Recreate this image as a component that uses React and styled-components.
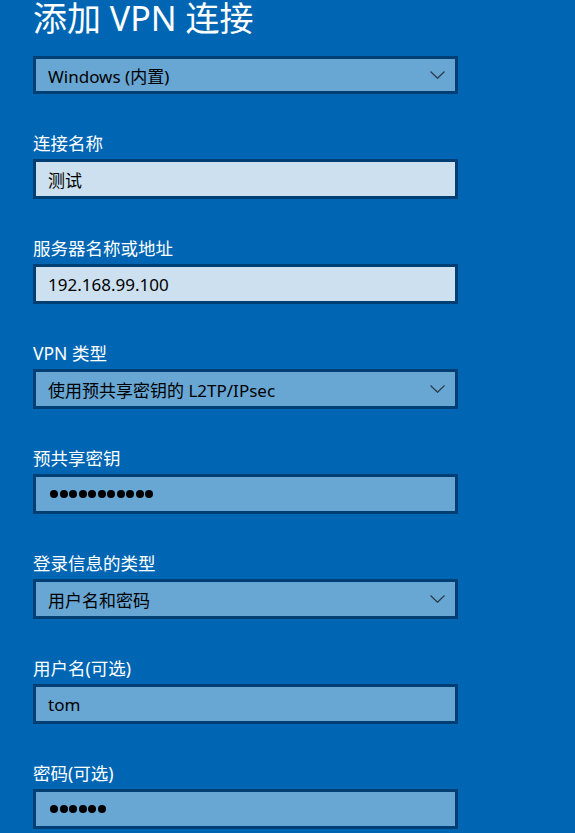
import styled, { createGlobalStyle } from 'styled-components';

const GlobalStyle = createGlobalStyle`
  html, body {
    margin: 0;
    padding: 0;
    background: #0066b4;
  }
  body {
    font-family: "Noto Sans", "Noto Sans CJK SC", sans-serif;
  }
`

const Page = styled.div`
  width: 575px;
  height: 833px;
  overflow: hidden;
  background: #0066b4;
  padding-left: 33px;
  box-sizing: border-box;
  display: flex;
  flex-direction: column;
  gap: 37px;
`

const Title = styled.h1`
  margin: 0 0 -17px 0;
  height: 36px;
  font-size: 34px;
  line-height: 36px;
  font-weight: 400;
  color: #ffffff;
  white-space: nowrap;
`

const Field = styled.div`
  display: flex;
  flex-direction: column;
  gap: 4px;
`

const Label = styled.div`
  height: 24px;
  font-size: 17.5px;
  line-height: 24px;
  color: #ffffff;
`

const Box = styled.div`
  width: 425px;
  height: ${(p) => (p.compact ? '38px' : '40px')};
  flex: none;
  box-sizing: border-box;
  border: 3px solid #003f73;
  background: ${(p) => (p.light ? '#cce0ef' : '#68a6d3')};
  display: flex;
  align-items: center;
  justify-content: space-between;
  padding: 0 10px 0 12px;
  font-size: 17px;
  color: #000000;
`

const Chevron = styled.svg`
  width: 15px;
  height: 8px;
  flex: none;
`

const Dots = styled.div`
  display: flex;
  gap: 1.5px;
  padding-left: 2px;
`

const Dot = styled.span`
  width: 8px;
  height: 8px;
  border-radius: 50%;
  background: #000000;
`

function Select(props) {
    return (
        <Box compact={props.compact}>
            <span>{props.value}</span>
            <Chevron viewBox="0 0 15 8">
                <path d="M0.5 0.5 L7.5 7.3 L14.5 0.5" fill="none" stroke="#2b3a4a" strokeWidth="1.2" />
            </Chevron>
        </Box>
    )
}

function Secret(props) {
    let dots = [];
    for (let i = 0; i < props.count; i++) {
        dots.push(<Dot key={i} />)
    }
    return (
        <Box>
            <Dots>{dots}</Dots>
        </Box>
    )
}

export default function App() {
    return (
        <Page>
            <GlobalStyle />
            <Title>添加 VPN 连接</Title>
            <Select compact value="Windows (内置)" />
            <Field>
                <Label>连接名称</Label>
                <Box light>测试</Box>
            </Field>
            <Field>
                <Label>服务器名称或地址</Label>
                <Box light>192.168.99.100</Box>
            </Field>
            <Field>
                <Label>VPN 类型</Label>
                <Select value="使用预共享密钥的 L2TP/IPsec" />
            </Field>
            <Field>
                <Label>预共享密钥</Label>
                <Secret count={11} />
            </Field>
            <Field>
                <Label>登录信息的类型</Label>
                <Select value="用户名和密码" />
            </Field>
            <Field>
                <Label>用户名(可选)</Label>
                <Box>tom</Box>
            </Field>
            <Field>
                <Label>密码(可选)</Label>
                <Secret count={6} />
            </Field>
        </Page>
    )
}
